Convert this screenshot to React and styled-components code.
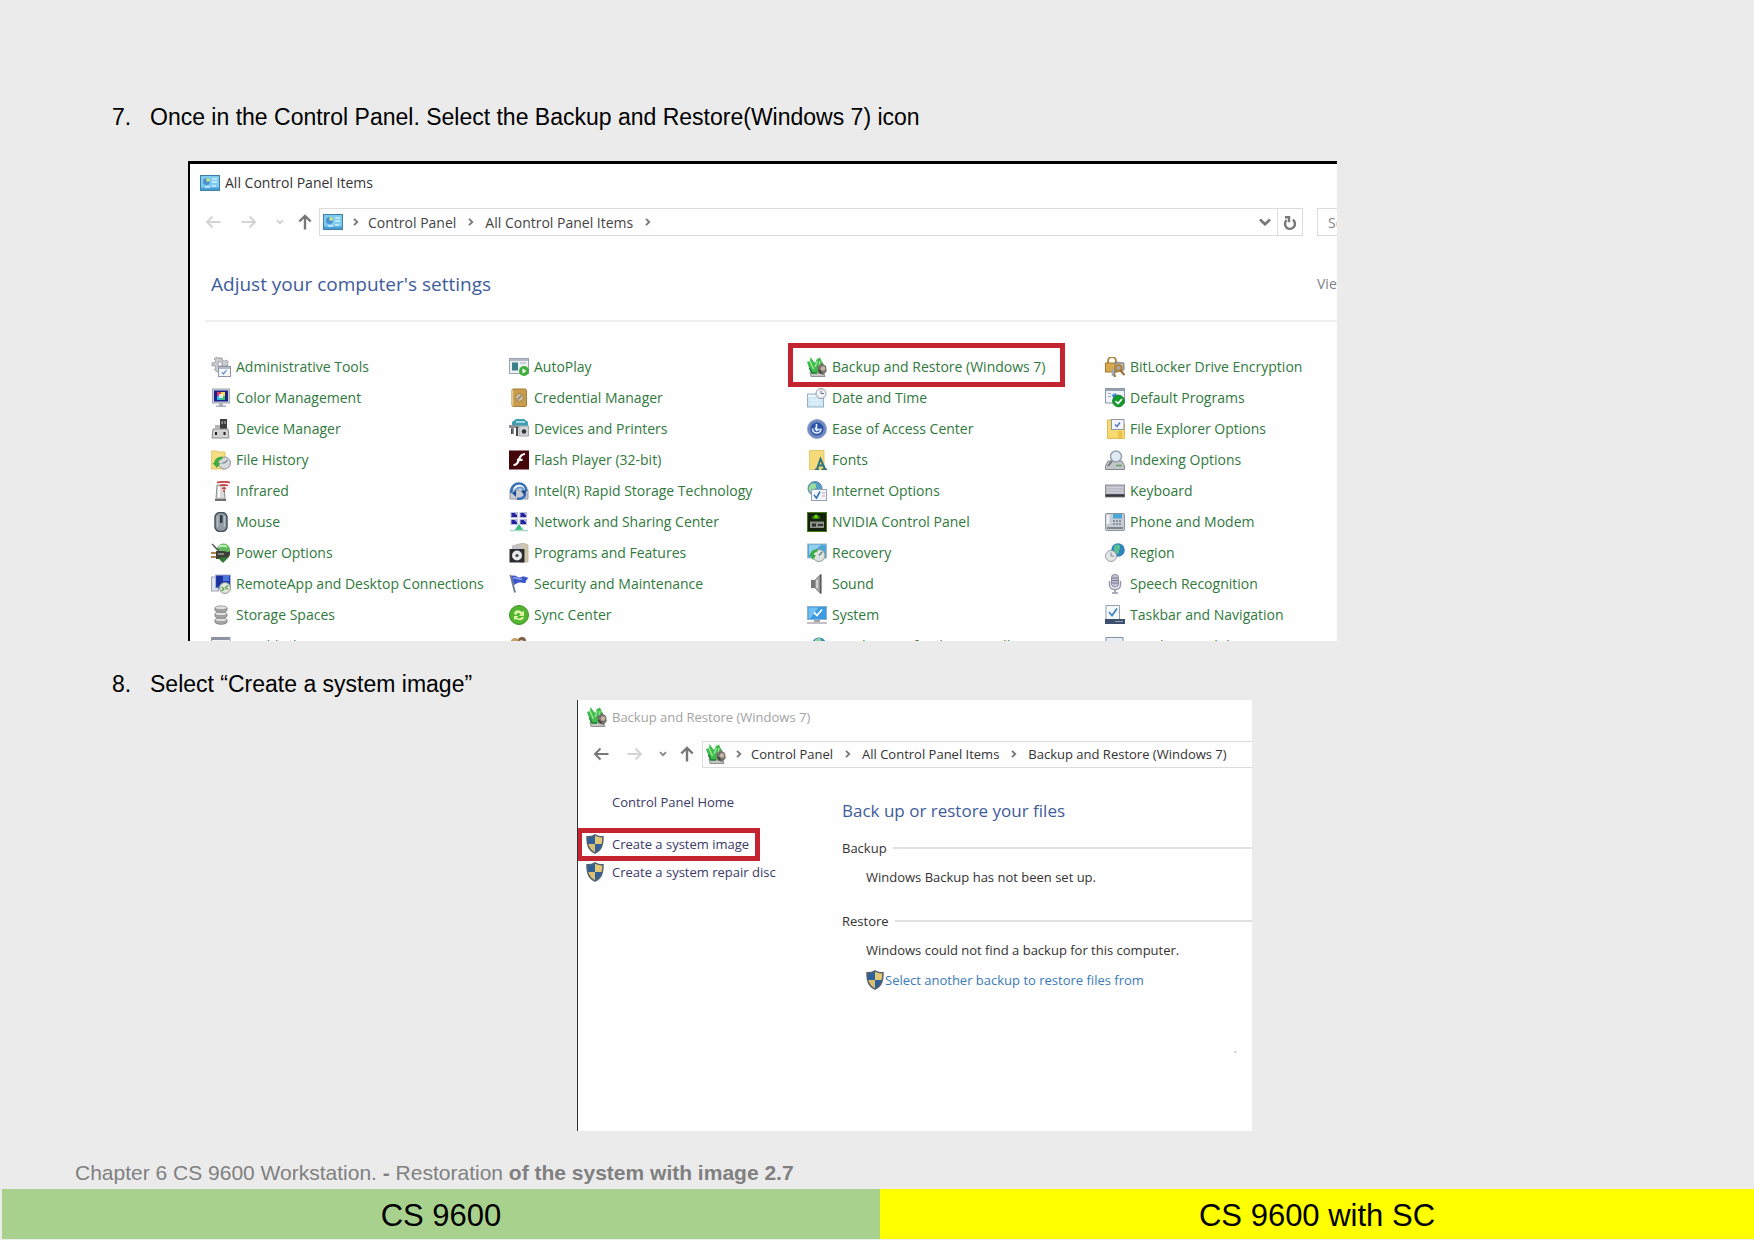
import React from "react";
import styled, { createGlobalStyle } from "styled-components";

const GlobalStyle = createGlobalStyle`
  *, *::before, *::after { box-sizing: border-box; }
  body { margin: 0; background: #ebebeb; }
  button, input { font: inherit; color: inherit; }
  a { color: inherit; text-decoration: none; }
  h1, h2, h3, p, ol, ul { margin: 0; padding: 0; font-weight: inherit; font-size: inherit; }
  ol, ul { list-style: none; }
  svg { display: block; flex: none; }
`;

const Page = styled.div`
  min-height: 100vh;
  display: flex;
  flex-direction: column;
  font-family: "Liberation Sans", Arial, sans-serif;
  color: #000;
`;

const Steps = styled.ol`
  flex: 1;
  padding: 102px 112px 0;
`;

const StepText = styled.p`
  display: flex;
  font-size: 23px;
  line-height: 30px;
`;

const StepNumber = styled.span`
  width: 38px;
  flex: none;
`;

const Shot = styled.section`
  font-family: "Open Sans", "Noto Sans", sans-serif;
  background: #fefefe;
  overflow: hidden;
`;

const PanelShot = styled(Shot)`
  max-width: 1149px;
  height: 480px;
  margin: 29px 0 28px 76px;
  border-left: 2px solid #000;
  border-top: 3px solid #000;
  font-size: 14px;
`;

const BackupShot = styled(Shot)`
  max-width: 675px;
  height: 431px;
  margin: 1px 0 0 465px;
  border-left: 1px solid #333;
  font-size: 13px;
`;

const TitleBar = styled.h1`
  display: flex;
  align-items: center;
  gap: 5px;
  height: ${(p) => p.$h}px;
  padding-left: ${(p) => p.$pad}px;
  color: ${(p) => p.$color};
`;

const AddressRow = styled.div`
  display: flex;
  align-items: center;
  height: 42px;
  padding-left: 6px;
  margin-right: -40px;
`;

const NavButton = styled.button`
  display: flex;
  justify-content: center;
  align-items: center;
  width: ${(p) => p.$w}px;
  height: 28px;
  flex: none;
  padding: 0;
  border: 0;
  background: none;
  color: ${(p) => p.$color || "#777"};
`;

const AddressBox = styled.nav`
  flex: 1;
  display: flex;
  align-items: center;
  height: ${(p) => p.$h}px;
  padding-left: 3px;
  border: 1px solid #dcdcdc;
  color: ${(p) => p.$color};
  white-space: nowrap;
`;

const Separator = styled.span`
  display: flex;
  justify-content: center;
  width: ${(p) => (p.$first ? 25 : 29)}px;
  color: #777;
`;

const Spacer = styled.span`
  flex: 1;
`;

const Refresh = styled.div`
  display: flex;
  height: 100%;
  border-left: 1px solid #dcdcdc;
`;

const SearchInput = styled.input`
  width: 60px;
  height: 28px;
  flex: none;
  margin-left: 14px;
  padding: 0 0 0 10px;
  border: 1px solid #dcdcdc;
  background: transparent;
  &::placeholder { color: #888; opacity: 1; }
`;

const SettingsHead = styled.div`
  display: flex;
  justify-content: space-between;
  align-items: center;
  height: 79px;
  margin: 0 -40px 0 15px;
  padding: 4px 0 0 6px;
  border-bottom: 2px solid #efefef;
`;

const Heading = styled.h2`
  font-size: ${(p) => p.$size}px;
  line-height: 26px;
  color: #3e5c9c;
`;

const ViewBy = styled.span`
  width: 60px;
  color: #7c8088;
  white-space: nowrap;
`;

const ItemGrid = styled.ul`
  display: grid;
  grid-template-columns: repeat(4, 298px);
  grid-auto-rows: 31px;
  padding: 29px 0 0 21px;
`;

const Item = styled.li`
  display: flex;
  align-items: center;
`;

const ItemLink = styled.a`
  position: relative;
  display: flex;
  align-items: center;
  gap: 5px;
  color: #31793d;
  white-space: nowrap;
`;

const Marker = styled.span`
  position: absolute;
  inset: ${(p) => p.$inset};
  border: 5px solid #c4242f;
  pointer-events: none;
`;

const BackupBody = styled.div`
  display: grid;
  grid-template-columns: 264px 1fr;
`;

const Sidebar = styled.div`
  display: flex;
  flex-direction: column;
  padding: 13px 0 0 8px;
`;

const SideLink = styled.a`
  position: relative;
  align-self: flex-start;
  display: flex;
  align-items: center;
  gap: 8px;
  height: 28px;
  padding-left: ${(p) => (p.$indent ? 26 : 0)}px;
  margin-bottom: ${(p) => (p.$indent ? 14 : 0)}px;
  color: #3a3a68;
  white-space: nowrap;
`;

const Files = styled.div`
  padding-top: 23px;
  color: #333;
`;

const GroupTitle = styled.h3`
  display: flex;
  align-items: center;
  gap: 6px;
  height: 20px;
  margin-top: ${(p) => p.$gap}px;
  &::after {
    content: "";
    flex: 1;
    height: 2px;
    background: #e0e0e0;
  }
`;

const Line = styled.p`
  padding-left: 24px;
  margin-top: 9px;
  line-height: 20px;
  white-space: nowrap;
`;

const RestoreLink = styled.a`
  display: flex;
  align-items: center;
  gap: 1px;
  height: 20px;
  margin: 10px 0 0 24px;
  color: #3a7ab8;
  white-space: nowrap;
`;

const EndDot = styled.p`
  margin-top: 48px;
  padding-right: 15px;
  line-height: 20px;
  text-align: right;
  color: #aaa;
`;

const Chapter = styled.p`
  padding: 0 75px;
  font-size: 21px;
  line-height: 24px;
  margin-bottom: 4px;
  color: #808080;
`;

const Tabs = styled.footer`
  display: grid;
  grid-template-columns: 878fr 874fr;
  padding: 0 0 1px 2px;
`;

const Tab = styled.div`
  background: ${(p) => p.$bg};
  text-align: center;
  font-size: 31px;
  line-height: 46px;
  padding-top: 4px;
`;

/* ---------- line icons ---------- */

const Stroke = ({ w, h, sw = 2, d }) => (
  <svg width={w} height={h} viewBox={`0 0 ${w} ${h}`} fill="none" stroke="currentColor" strokeWidth={sw} aria-hidden="true">
    <path d={d} />
  </svg>
);
const Back = () => <Stroke w={16} h={14} d="M15.500 7H2M7.500 1.500 2 7l5.500 5.500" sw={2} />;
const Forward = () => <Stroke w={16} h={14} d="M.5 7H14M8.500 1.500 14 7l-5.500 5.500" sw={2} />;
const Up = () => <Stroke w={14} h={16} d="M7 15.500V2M1.300 7.500 7 2l5.700 5.500" sw={2.400} />;
const Caret = () => <Stroke w={8} h={6} d="M1 1.200 4 4.200 7 1.200" sw={1.800} />;
const Chevron = () => <Stroke w={6} h={8} d="M1 .8 4.300 4 1 7.200" sw={1.800} />;
const Drop = () => <Stroke w={12} h={8} d="M1 1.500 6 6.300 11 1.500" sw={2.600} />;
const Reload = () => <Stroke w={14} h={15} d="M9.800 3.800A5 5 0 1 1 3.600 4.200M2 1.300H6V6.200" sw={2.400} />;

/* ---------- picture icons ---------- */

const art = {
  panel: (
    <>
      <rect x="0.500" y="2.500" width="19" height="15" fill="#7ecbf0" stroke="#3f7fa8" />
      <path d="M1 14.500h18v2.500H1z" fill="#4a9fd4" />
      <circle cx="6.500" cy="8.500" r="3.500" fill="#4b90cf" />
      <path d="M6.500 8.500V5A3.500 3.500 0 0 1 10 8.500z" fill="#d8e87a" />
      <path d="M12 6h5M12 9h5M5 14h5M12 13h4" stroke="#d4effb" strokeWidth="1.500" />
    </>
  ),
  admin: (
    <>
      <path d="M8 1h3l.4 2.300 2 .9 2-1.300 2 2-1.300 2 .9 2.100H8v5l-2.500.7-2-1.900 1.200-2L3.900 9 1 8.600V6l2.900-.5.8-1.800L3 2l2-1.500z" fill="#c9cdd1" stroke="#8b9196" strokeWidth=".8" />
      <circle cx="9" cy="7" r="2.300" fill="#f3f3f3" stroke="#8b9196" strokeWidth=".8" />
      <rect x="7.500" y="9.500" width="12" height="10" fill="#f5f7fb" stroke="#8e95a5" />
      <path d="M8 11h11" stroke="#9aa4b8" strokeWidth="1.500" />
      <path d="m11 15 1.500 2 3-4" fill="none" stroke="#5686c8" strokeWidth="1.200" />
    </>
  ),
  color: (
    <>
      <rect x="1.500" y="1" width="17" height="14" fill="#c9cfd8" stroke="#a0a8b4" />
      <rect x="3" y="2.500" width="14" height="11" fill="#20208c" />
      <path d="M6 4h4v4H6z" fill="#e23a62" /><path d="M10 4h4v4h-4z" fill="#f3e04a" />
      <path d="M6 8h4v4H6z" fill="#35b6ea" /><path d="M10 8h4v4h-4z" fill="#3bc25b" />
      <path d="M8 6h4v4H8z" fill="#fff" opacity=".8" />
      <path d="M8 15h4v2.500h3V19H5v-1.500h3z" fill="#a9b0ba" />
    </>
  ),
  device: (
    <>
      <path d="M9 0h7v10H9z" fill="#3c3c3c" /><path d="M10.500 2h1.500v3h-1.500zM13.300 2h1.500v3h-1.500z" fill="#999" />
      <path d="M2 10h15l1 9H1z" fill="#d3d3d3" stroke="#8b8b8b" />
      <path d="M5 13v3M13.500 13v3" stroke="#222" strokeWidth="2" />
      <path d="M4 6h5v4H4z" fill="#b5b5b5" />
    </>
  ),
  history: (
    <>
      <path d="M0 1h6l1 1h7v17H0z" fill="#f5dd83" stroke="#dcbc57" strokeWidth=".8" />
      <circle cx="13.500" cy="13" r="6" fill="#d5d9dc" stroke="#8f969c" />
      <path d="M13.500 13l3-3M13.500 13h-3" stroke="#7a838a" strokeWidth="1.200" />
      <path d="M3 13c1-5 5-7 9-6l-1 2.500c-2.500 0-4 1.500-4 3.500h2.500L6 18l-4.500-5z" fill="#3fae3d" />
    </>
  ),
  infrared: (
    <>
      <path d="M6 4h7l1 14H5z" fill="#dadada" stroke="#8f8f8f" />
      <path d="M4 18h11v2H4z" fill="#6f6f6f" /><path d="M8 6v10" stroke="#fff" strokeWidth="2" />
      <path d="M6 1.500c5-1 9-1 13 0M9 4.500c3-1 6-.5 8 0M11 7.500c2-.5 3-.5 4 0M12 10h2" fill="none" stroke="#c94444" strokeWidth="1.700" />
    </>
  ),
  mouse: (
    <>
      <rect x="4" y="0.500" width="12" height="19" rx="5" fill="#8f9aa3" stroke="#48525a" strokeWidth="1.500" />
      <path d="M6.500 4v11M13.500 4v11" stroke="#b4bec6" strokeWidth="1.500" />
      <rect x="9" y="3" width="2.500" height="8" rx="1" fill="#2f3940" />
    </>
  ),
  power: (
    <>
      <circle cx="12.500" cy="7" r="6.500" fill="#5fb85c" /><path d="M8 4a7 6 0 0 1 8 0" stroke="#c4eebd" strokeWidth="2" fill="none" />
      <path d="M1 1c3 2 3 5 7 6" fill="none" stroke="#555" strokeWidth="1.500" />
      <path d="M5 8h7c3 0 5 2 7 0v4c-2 3-4 4-7 4H5z" fill="#3c4038" />
      <path d="M0 10h5M0 14h5" stroke="#a8834f" strokeWidth="2" />
      <path d="M7 15l5 5 6-6z" fill="#367a35" /><path d="M7 11h6" stroke="#9aa08f" strokeWidth="1.500" />
    </>
  ),
  remote: (
    <>
      <rect x="0.500" y="3" width="7" height="14" fill="#dfe3ec" stroke="#9da4b8" />
      <rect x="4.500" y="1" width="15" height="13" fill="#1d3bb0" stroke="#aab4d0" />
      <path d="M6 2h6l-3 10H6z" fill="#1f2f9a" /><path d="M12 2h6v5h-6z" fill="#4d77dc" />
      <circle cx="14" cy="14" r="5.500" fill="#dfe6dc" stroke="#8f9b8d" />
      <path d="m10.500 13 2.500 2-2.500 2M17 11.500l-2.500 2 2.500 2" fill="none" stroke="#5a9e4a" strokeWidth="1.300" />
    </>
  ),
  storage: (
    <>
      {[14, 8, 2].map((y) => (
        <g key={y}>
          <path d={`M4 ${y + 1}v2c0 3 12 3 12 0v-2z`} fill="#a8a8a8" stroke="#777" strokeWidth=".8" />
          <ellipse cx="10" cy={y + 0.8} rx="6" ry="1.900" fill="#e2e2e2" stroke="#888" strokeWidth=".8" />
        </g>
      ))}
    </>
  ),
  troubleshoot: (
    <>
      <rect x="0.500" y="1.500" width="18.500" height="15" fill="#f4f5f7" stroke="#8d93a0" />
      <path d="M1 3h17.500" stroke="#8d93a0" strokeWidth="2" />
    </>
  ),
  autoplay: (
    <>
      <rect x="0.500" y="1.500" width="19" height="15" fill="#eef1f4" stroke="#99a3ad" />
      <path d="M1 3h18" stroke="#b3bcc6" strokeWidth="2" />
      <rect x="3" y="5.500" width="6" height="8" fill="#3b7f88" />
      <path d="M11 6h6" stroke="#b9c2cc" strokeWidth="1.500" />
      <circle cx="15" cy="14" r="5" fill="#3fae3a" /><path d="M13.500 11.500v5l4-2.500z" fill="#fff" />
    </>
  ),
  credential: (
    <>
      <rect x="3" y="1" width="14.500" height="17.500" rx="1.500" fill="#c99c4d" stroke="#a67d36" />
      <path d="M3.500 2v15.500" stroke="#e8c98a" strokeWidth="1.500" />
      <circle cx="10.500" cy="9.500" r="4" fill="#dcc08a" stroke="#94804f" />
      <path d="m8.500 11.500 4-4" stroke="#8c8c8c" strokeWidth="1.800" />
    </>
  ),
  printers: (
    <>
      <path d="M3 3l4-3h8l4 3v4H3z" fill="#3e9fb0" /><path d="M7 3h9" stroke="#c1e8ee" strokeWidth="1.500" />
      <path d="M0 6h10v3H5v6H2V9H0z" fill="#8b8f94" /><path d="M7 8h2v9H7zM2 10h1.500v5H2z" fill="#44484d" />
      <rect x="10" y="7" width="9.500" height="10" fill="#cfd2d6" stroke="#a3a8ad" />
      <circle cx="15" cy="12.500" r="2.200" fill="#2f3338" />
    </>
  ),
  flash: (
    <>
      <rect width="20" height="19" y=".5" fill="#430609" />
      <path d="M16 4c-4 0-5 2.500-6 5.500-1 3.500-2 5.500-5.500 5.500M8 9.800h5.500" fill="none" stroke="#fff" strokeWidth="2.200" />
    </>
  ),
  intel: (
    <>
      <path d="M1 9h18v9H1z" fill="#c8ccd2" stroke="#9198a2" />
      <path d="M2.500 12C1.500 7 5 2.500 10 2.500c4 0 7 3 7.500 7" fill="none" stroke="#3a70b8" strokeWidth="2.600" />
      <path d="M8 17.500c4 1 8-1 8.500-5" fill="none" stroke="#3a70b8" strokeWidth="2.400" />
      <path d="M6.500 13.500c-1.500-4 1-7 4.500-7 2 0 3.500 1.500 3.500 4" fill="none" stroke="#6a9ad2" strokeWidth="2" />
      <path d="m3 12 4 4V9.500zM18 9l-6 1 3.500 4.500z" fill="#1d4a91" />
    </>
  ),
  network: (
    <>
      {[[2, 0], [11, 0], [2, 7], [11, 7]].map(([x, y]) => (
        <g key={`${x}-${y}`}>
          <rect x={x} y={y + 0.500} width="6.500" height="5" fill="#24249a" stroke="#b8bedb" />
          <path d={`M${x + 3.500} ${y + 1}h2.500v2.500z`} fill="#a7aff2" />
        </g>
      ))}
      <path d="m10 12 5 7H5z" fill="#3aba83" />
      <path d="M1 18.500h18" stroke="#a9d7cb" strokeWidth="1.500" />
    </>
  ),
  programs: (
    <>
      <path d="M3 3 14 0l5 2v17h-8z" fill="#cfc6a8" stroke="#b9b29e" strokeWidth=".8" /><path d="M3 3 14 1v5H3z" fill="#c2c4c8" />
      <rect x="0.500" y="6" width="15" height="13.500" fill="#2c2c2f" />
      <circle cx="8" cy="12.500" r="5" fill="#e6e8ea" /><circle cx="8" cy="12.500" r="1.600" fill="#44474a" />
    </>
  ),
  security: (
    <>
      <path d="M1.500 1 6 18.500" stroke="#6d7690" strokeWidth="1.800" />
      <path d="M2.500 2c5-2 6 3 10 1 2-1 4 0 7 1-2 2-3 3-3 5-4 0-5-1-8 0L5 11z" fill="#3a57c8" />
      <path d="M4 4c4-1 5 2 9 1" fill="none" stroke="#8ba0ee" strokeWidth="1.500" />
    </>
  ),
  sync: (
    <>
      <circle cx="10" cy="10" r="9.500" fill="#53b531" stroke="#3b9323" />
      <path d="M5 9c0-4 5-5 8-2l2-1v5H10l1.500-2c-2-2-4-1-4 1zM15 12c-1 4-5 4-8 2l-2 1v-4h4l-1 2c2 1 4 0 5-1z" fill="#dcf5a4" />
    </>
  ),
  users: (
    <>
      <circle cx="6" cy="6.500" r="4.500" fill="#c9a06a" /><circle cx="13" cy="5" r="4" fill="#7c6144" /><circle cx="12.500" cy="6.500" r="2.500" fill="#e6c9a4" />
      <path d="M0 18c0-6 12-6 12 0z" fill="#6fae58" />
    </>
  ),
  backup: (
    <>
      <path d="M3 15h13l2 4.500H4z" fill="#c3c6c2" stroke="#7c7e7b" strokeWidth=".8" />
      <path d="M0 5l3-1 .5-4L6 3.500 8 6l2-4 3-1.500L14.500 4l2 3-2 5-4 4H5L2.500 12z" fill="#3ebb4c" />
      <path d="M3 4l3.500 8M10.500 4 8 10M13 4l-1 6" stroke="#9be898" strokeWidth="1.400" fill="none" />
      <path d="M2.500 11 5 16h5" stroke="#1f7a30" strokeWidth="1.500" fill="none" />
      <path d="M10 10l4.500-4 4.500 3 .8 5-3.300 4-5-1.500z" fill="#75736c" />
      <circle cx="16" cy="11.500" r="2.300" fill="#c9b3a6" /><path d="M11.500 13l3 3" stroke="#3c3b38" strokeWidth="1.500" />
    </>
  ),
  date: (
    <>
      <rect x="0.500" y="6" width="16" height="13" fill="#cfe6f3" stroke="#93b2c6" /><path d="M1 8h15" stroke="#eff8fd" strokeWidth="2" />
      <path d="M3 12h11M3 15.500h11M6 10v8M10 10v8" stroke="#e4f3fb" />
      <circle cx="14" cy="5.500" r="5" fill="#eef0f4" stroke="#9499a8" /><path d="M14 2.500v3h3" fill="none" stroke="#6d7486" />
    </>
  ),
  ease: (
    <>
      <circle cx="10" cy="10" r="9.500" fill="#6d86bf" stroke="#9aa9cc" /><circle cx="10" cy="10" r="6.500" fill="#2a52a6" />
      <path d="M9.500 5v6M5.500 9.500c0 6 8.500 6 8.500 0M8 8.500l1.500 3 3-1.500" fill="none" stroke="#e9f1ff" strokeWidth="1.600" />
    </>
  ),
  fonts: (
    <>
      <path d="M2.500.5H17v19H2.500z" fill="#f5da7a" stroke="#dfbe58" strokeWidth=".8" />
      <path d="M8 19.500h4M14.500 19.500H20M10 19l3.500-10L18 19M11.500 15.500h5" fill="none" stroke="#2f747c" strokeWidth="2" />
    </>
  ),
  internet: (
    <>
      <circle cx="8" cy="7.500" r="7" fill="#4f9fc6" stroke="#5e88a8" /><path d="M4 3c3-2 6 0 5 3s-4 2-5 6c-3-3-3-6 0-9z" fill="#9fdc9a" />
      <rect x="4.500" y="8.500" width="15" height="11" fill="#f3f6fb" stroke="#98a0b4" />
      <path d="m7 14 2.500 3L13 10.500" fill="none" stroke="#3473c0" strokeWidth="1.600" /><path d="M15 12h3M15 15h3" stroke="#c8a1a8" />
    </>
  ),
  nvidia: (
    <>
      <rect x=".5" y=".5" width="19" height="19" fill="#14230c" stroke="#4a7a1c" />
      <path d="M5 7V4h8v3z" fill="#35700e" /><circle cx="9" cy="4.500" r="2" fill="#5fd411" />
      <rect x="3" y="9.500" width="14" height="6.500" fill="#8d9289" /><path d="M5 11.500h4v3H5z" fill="#2c3128" /><path d="M11 13h5" stroke="#333" strokeWidth="2" />
    </>
  ),
  recovery: (
    <>
      <rect x="0.500" y="1" width="19" height="14" fill="#4fa4d8" stroke="#a2bccb" /><path d="M2 2h12L2 12z" fill="#8fd0ee" />
      <circle cx="12" cy="12.500" r="6" fill="#dde3e0" stroke="#8a9a92" /><path d="M12 12.500 15 9" stroke="#6e7f78" strokeWidth="1.300" />
      <path d="M3 12c1-5 4-6 8-5.500l-1 2.500c-2 0-3.500 1-3 3h2L6 17z" fill="#3cab46" />
    </>
  ),
  sound: (
    <>
      <path d="M4 6h5v8H4z" fill="#777" /><path d="M8 6l6-6v20l-6-6z" fill="#a9a9a9" stroke="#7d7d7d" strokeWidth=".8" />
      <path d="M13.500 1v18" stroke="#5d5d5d" strokeWidth="1.800" /><path d="M10 6v8" stroke="#e0e0e0" strokeWidth="1.500" />
    </>
  ),
  system: (
    <>
      <rect x="0.500" y="1.500" width="19" height="13" fill="#3b9ae0" stroke="#8ab2cf" /><path d="M1.500 2.500h10l-8 11h-2z" fill="#71bff0" />
      <path d="m7 7.500 3 3 5-6" fill="none" stroke="#fff" strokeWidth="1.800" /><path d="M7 15h6v2H7z" fill="#9aa7b0" /><path d="M0 18h20" stroke="#b3a9b0" strokeWidth="1.500" />
    </>
  ),
  firewall: (
    <>
      <circle cx="12" cy="9" r="7.500" fill="#3e8fb4" /><path d="M8 4c3-3 7-2 6 1s-5 2-6 6z" fill="#8fd4a0" />
    </>
  ),
  bitlocker: (
    <>
      <path d="M3 7V4a4 4 0 0 1 8 0v3" fill="none" stroke="#b08a48" strokeWidth="2" /><rect x="0.500" y="6" width="12" height="9" fill="#d8a94e" stroke="#a57c33" />
      <path d="M10 5l9 1v7l-9 2z" fill="#a4a8a6" stroke="#777" strokeWidth=".8" /><path d="M11 8h7" stroke="#e0e4e2" />
      <circle cx="13.500" cy="11" r="3" fill="none" stroke="#b4843a" strokeWidth="2" /><path d="m15 13 4.500 5M8 12l2 8" stroke="#936d33" strokeWidth="2" /><path d="M8 12v7" stroke="#a2a8b6" strokeWidth="2.500" />
    </>
  ),
  defaults: (
    <>
      <rect x="0.500" y="0.500" width="19" height="14.500" fill="#f0f3f7" stroke="#8b99a8" /><path d="M1 2h18" stroke="#8b99a8" strokeWidth="1.800" />
      <path d="M3 5.500h3M3 8.500h3" stroke="#9ab" /><path d="m6.500 7 4-2 3 4-4 3z" fill="#4d8fe0" />
      <circle cx="13.500" cy="13" r="5.800" fill="#159a2e" stroke="#0f7b22" /><path d="m10.500 13 2.500 2.500 4-4.500" fill="none" stroke="#fff" strokeWidth="1.700" />
    </>
  ),
  explorer: (
    <>
      <path d="M2.500 1h6v4h11v14.500h-17z" fill="#f6d970" stroke="#dfbd4e" /><rect x="6.500" y="0.500" width="12.500" height="10" fill="#f2f4fa" stroke="#8e95a9" />
      <path d="m10 5.500 2 2 3-4" fill="none" stroke="#4b72c0" strokeWidth="1.400" /><path d="M13 12h4v7h-4z" fill="#e9c250" />
    </>
  ),
  indexing: (
    <>
      <path d="M3 11h14l2.500 5v3.500H.5V16z" fill="#c3c6c8" stroke="#85898d" /><circle cx="11" cy="6.500" r="5.500" fill="#dfeaf3" stroke="#97a3b0" strokeWidth="1.500" />
      <path d="m7 11-4 5" stroke="#6f767d" strokeWidth="2" /><path d="M11 15.500h6" stroke="#5d9a68" strokeWidth="1.500" />
    </>
  ),
  keyboard: (
    <>
      <rect x="0.500" y="4" width="19" height="12" fill="#b9bac4" stroke="#8e8f99" /><path d="M2 6.500h16M2 9h16M2 11.500h16" stroke="#cfd0d9" /><path d="M.5 14.500h19" stroke="#35353d" strokeWidth="2.500" />
    </>
  ),
  phone: (
    <>
      <rect x="0.500" y="1.500" width="19" height="17" rx="1.500" fill="#c7ccd3" stroke="#8d949d" /><rect x="8" y="2" width="9" height="4.500" fill="#4aa6d6" />
      <path d="M3 3v9" stroke="#eff3f6" strokeWidth="3" /><path d="M8 9h9M8 12h9" stroke="#79828c" strokeWidth="1.500" strokeDasharray="2 1" /><path d="M2 16h16" stroke="#7f8790" strokeWidth="2" />
    </>
  ),
  region: (
    <>
      <circle cx="13" cy="7" r="6.800" fill="#2f83b8" /><path d="M9 3c4-3 7-1 6 2s-1 2-1 6c-4 0-6-4-5-8z" fill="#58c095" />
      <circle cx="6" cy="13" r="5.500" fill="#e3e6e8" stroke="#9aa0a6" /><path d="M6 9.500V13h3" fill="none" stroke="#7e868e" />
    </>
  ),
  speech: (
    <>
      <rect x="6.500" y="0.500" width="7" height="12.500" rx="3" fill="#c3c3d3" stroke="#8888a0" /><path d="M7 4h6M7 6.500h6M7 9h6" stroke="#77778f" />
      <path d="M4.500 7v4c0 6 11 6 11 0V7M10 15v3.500M7 19h6" fill="none" stroke="#9696ac" strokeWidth="1.500" />
    </>
  ),
  taskbar: (
    <>
      <path d="M1 .5h13.500V15H1z" fill="#f5f8fc" stroke="#93a0b2" /><path d="m4 7 3 3.500L12 3.500" fill="none" stroke="#3d85c8" strokeWidth="1.800" />
      <path d="M0 14h20v5H0z" fill="#3c4f6c" /><path d="M10 16.500h8" stroke="#8fa0b8" />
    </>
  ),
  mobility: (
    <>
      <rect x="1" y="1.500" width="17" height="14" fill="#e8edf4" stroke="#7f8fa8" /><rect x="5" y="5" width="14" height="10" fill="#5a79a8" />
    </>
  ),
};

const Picture = ({ name, size = 20 }) => (
  <svg width={size} height={size} viewBox="0 0 20 20" fill="none" aria-hidden="true">{art[name]}</svg>
);

const Shield = () => (
  <svg width="18" height="20" viewBox="0 0 18 20" aria-hidden="true">
    <path d="M9 .8C6.500 2.400 3.500 3 1 2.800 1 11 2.500 16 9 19.200 15.500 16 17 11 17 2.800 14.500 3 11.500 2.400 9 .8z" fill="#2f6199" />
    <path d="M9 .8C11.500 2.400 14.500 3 17 2.800c0 3-.2 5.200-.8 7.200H9z" fill="#e2c877" />
    <path d="M1.800 10H9v9.200C5 17.200 2.800 14.300 1.800 10z" fill="#dcc070" />
    <path d="M9 .8C6.500 2.400 3.500 3 1 2.800 1 11 2.500 16 9 19.200 15.500 16 17 11 17 2.800 14.500 3 11.500 2.400 9 .8z" fill="none" stroke="#566270" strokeWidth="1.500" />
  </svg>
);

const items = [
  ["admin", "Administrative Tools"], ["autoplay", "AutoPlay"], ["backup", "Backup and Restore (Windows 7)"], ["bitlocker", "BitLocker Drive Encryption"],
  ["color", "Color Management"], ["credential", "Credential Manager"], ["date", "Date and Time"], ["defaults", "Default Programs"],
  ["device", "Device Manager"], ["printers", "Devices and Printers"], ["ease", "Ease of Access Center"], ["explorer", "File Explorer Options"],
  ["history", "File History"], ["flash", "Flash Player (32-bit)"], ["fonts", "Fonts"], ["indexing", "Indexing Options"],
  ["infrared", "Infrared"], ["intel", "Intel(R) Rapid Storage Technology"], ["internet", "Internet Options"], ["keyboard", "Keyboard"],
  ["mouse", "Mouse"], ["network", "Network and Sharing Center"], ["nvidia", "NVIDIA Control Panel"], ["phone", "Phone and Modem"],
  ["power", "Power Options"], ["programs", "Programs and Features"], ["recovery", "Recovery"], ["region", "Region"],
  ["remote", "RemoteApp and Desktop Connections"], ["security", "Security and Maintenance"], ["sound", "Sound"], ["speech", "Speech Recognition"],
  ["storage", "Storage Spaces"], ["sync", "Sync Center"], ["system", "System"], ["taskbar", "Taskbar and Navigation"],
  ["troubleshoot", "Troubleshooting"], ["users", "User Accounts"], ["firewall", "Windows Defender Firewall"], ["mobility", "Windows Mobility Center"],
];

function NavButtons({ widths, backColor, caretColor }) {
  return (
    <>
      <NavButton aria-label="Back" $w={widths[0]} $color={backColor}><Back /></NavButton>
      <NavButton aria-label="Forward" $w={widths[1]} $color="#d4d4d4"><Forward /></NavButton>
      <NavButton aria-label="Recent locations" $w={widths[2]} $color={caretColor}><Caret /></NavButton>
      <NavButton aria-label="Up" $w={widths[3]}><Up /></NavButton>
    </>
  );
}

function Crumbs({ icon, names, trailing }) {
  return (
    <>
      <Picture name={icon} />
      {names.map((name, i) => (
        <React.Fragment key={name}>
          <Separator $first={i === 0}><Chevron /></Separator>
          <a href="#">{name}</a>
        </React.Fragment>
      ))}
      {trailing && <Separator><Chevron /></Separator>}
    </>
  );
}

function ControlPanel() {
  return (
    <PanelShot aria-label="All Control Panel Items">
      <TitleBar $h={37} $pad={10} $color="#333"><Picture name="panel" />All Control Panel Items</TitleBar>
      <AddressRow>
        <NavButtons widths={[34, 38, 23, 28]} backColor="#d4d4d4" caretColor="#d0d0d0" />
        <AddressBox $h={28} $color="#444">
          <Crumbs icon="panel" names={["Control Panel", "All Control Panel Items"]} trailing />
          <Spacer />
          <NavButton aria-label="Show locations" $w={24}><Drop /></NavButton>
          <Refresh><NavButton aria-label="Refresh" $w={24}><Reload /></NavButton></Refresh>
        </AddressBox>
        <SearchInput aria-label="Search" placeholder="Search" />
      </AddressRow>
      <SettingsHead>
        <Heading $size={19}>Adjust your computer's settings</Heading>
        <ViewBy>View by:</ViewBy>
      </SettingsHead>
      <ItemGrid>
        {items.map(([icon, label]) => (
          <Item key={icon}>
            <ItemLink href="#">
              <Picture name={icon} />
              {label}
              {icon === "backup" && <Marker $inset="-14px -19px -10px" />}
            </ItemLink>
          </Item>
        ))}
      </ItemGrid>
    </PanelShot>
  );
}

function BackupAndRestore() {
  return (
    <BackupShot aria-label="Backup and Restore (Windows 7)">
      <TitleBar $h={33} $pad={9} $color="#a3a3a3"><Picture name="backup" />Backup and Restore (Windows 7)</TitleBar>
      <AddressRow>
        <NavButtons widths={[33, 36, 19, 30]} backColor="#777" caretColor="#888" />
        <AddressBox $h={27} $color="#333">
          <Crumbs icon="backup" names={["Control Panel", "All Control Panel Items", "Backup and Restore (Windows 7)"]} />
        </AddressBox>
      </AddressRow>
      <BackupBody>
        <Sidebar>
          <SideLink href="#" $indent>Control Panel Home</SideLink>
          <SideLink href="#"><Shield />Create a system image<Marker $inset="-2px -11px -3px -9px" /></SideLink>
          <SideLink href="#"><Shield />Create a system repair disc</SideLink>
        </Sidebar>
        <Files>
          <Heading $size={17}>Back up or restore your files</Heading>
          <GroupTitle $gap={14}>Backup</GroupTitle>
          <Line>Windows Backup has not been set up.</Line>
          <GroupTitle $gap={24}>Restore</GroupTitle>
          <Line>Windows could not find a backup for this computer.</Line>
          <RestoreLink href="#"><Shield />Select another backup to restore files from</RestoreLink>
          <EndDot>.</EndDot>
        </Files>
      </BackupBody>
    </BackupShot>
  );
}

export default function App() {
  return (
    <>
      <GlobalStyle />
      <Page>
        <Steps>
          <li>
            <StepText><StepNumber>7.</StepNumber>Once in the Control Panel. Select the Backup and Restore(Windows 7) icon</StepText>
            <ControlPanel />
          </li>
          <li>
            <StepText><StepNumber>8.</StepNumber>Select “Create a system image”</StepText>
            <BackupAndRestore />
          </li>
        </Steps>
        <Chapter>Chapter 6 CS 9600 Workstation. <b>-</b> Restoration <b>of the system with image 2.7</b></Chapter>
        <Tabs>
          <Tab $bg="#a9d18e">CS 9600</Tab>
          <Tab $bg="#ffff00">CS 9600 with SC</Tab>
        </Tabs>
      </Page>
    </>
  );
}
